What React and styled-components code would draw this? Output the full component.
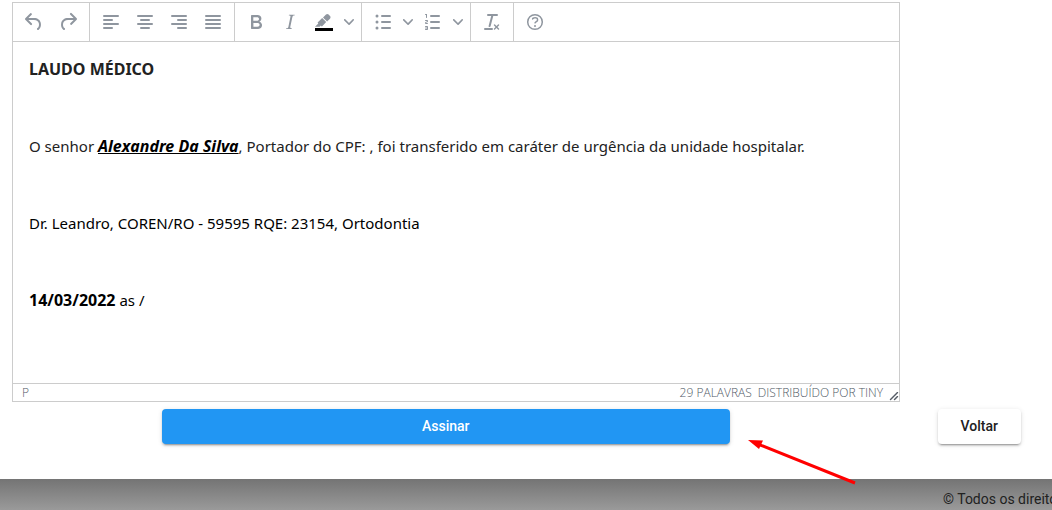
import React from 'react';
import styled, { createGlobalStyle } from 'styled-components';

const GlobalStyle = createGlobalStyle`
    * {
        box-sizing: border-box;
    }

    body {
        margin: 0;
        background: #9a9a9a;
        font-family: Roboto, "Liberation Sans", sans-serif;
        overflow-x: hidden;
    }
`;

const Card = styled.main`
    background: #fff;
    padding: 2px 31px 35px 12px;
`;

const Editor = styled.section`
    margin-right: 121px;
    border: 1px solid #ccc;
    background: #fff;
`;

const Toolbar = styled.div`
    display: flex;
    height: 39px;
    border-bottom: 1px solid #ccc;
`;

const ToolGroup = styled.div`
    display: flex;
    align-items: center;
    padding: 0 4px;

    & + & {
        border-left: 1px solid #ccc;
    }
`;

const ToolButton = styled.button`
    display: flex;
    align-items: center;
    justify-content: center;
    width: ${({ $narrow }) => ($narrow ? '16px' : '34px')};
    height: 34px;
    padding: 0;
    border: none;
    border-radius: 3px;
    background: none;
    color: #8f969f;
    cursor: pointer;

    &:hover {
        background: #dee0e2;
    }

    svg {
        display: block;
        flex: none;
        fill: currentColor;
    }
`;

const Content = styled.div`
    height: 341px;
    padding: 16px;
    overflow: hidden;
    color: #222;
    font-family: "Segoe UI", "Noto Sans", "Open Sans", sans-serif;
    font-size: 15px;
    line-height: 22px;
    outline: none;

    strong {
        font-size: 16px;
    }
`;

const Paragraph = styled.p`
    margin: 0 0 55px;
    color: ${({ $dark }) => ($dark ? '#000' : 'inherit')};
`;

const PatientName = styled.strong`
    color: #000;
    font-style: italic;
    text-decoration: underline;
`;

const StatusBar = styled.div`
    display: flex;
    align-items: center;
    height: 18px;
    padding: 0 0 0 9px;
    border-top: 1px solid #ccc;
    color: #4f5966;
    font-family: "Segoe UI", "Open Sans", "Noto Sans", sans-serif;
    font-size: 12px;
    font-weight: 300;
    line-height: 18px;
    text-transform: uppercase;
`;

const StatusInfo = styled.div`
    display: flex;
    gap: 6px;
    margin-left: auto;

    a {
        color: inherit;
        text-decoration: none;
    }
`;

const ResizeHandle = styled.svg`
    align-self: flex-end;
    margin-left: 6px;
    fill: #555c66;
    cursor: nwse-resize;
`;

const Actions = styled.div`
    position: relative;
    display: flex;
    gap: 208px;
    margin-top: 7px;
    padding-left: 150px;
`;

const ActionButton = styled.button`
    flex: ${({ $primary }) => ($primary ? '1' : 'none')};
    height: 35px;
    padding: 0 23px 2px;
    border: none;
    border-radius: 4px;
    background: ${({ $primary }) => ($primary ? '#2196f3' : '#fff')};
    color: ${({ $primary }) => ($primary ? '#fff' : '#212121')};
    box-shadow: 0 3px 1px -2px rgba(0, 0, 0, 0.2), 0 2px 2px rgba(0, 0, 0, 0.14), 0 1px 5px rgba(0, 0, 0, 0.12);
    font-family: Roboto, "Liberation Sans", sans-serif;
    font-size: 14px;
    font-weight: 500;
    cursor: pointer;
`;

const Arrow = styled.svg`
    position: absolute;
    top: 29px;
    right: 164px;
    pointer-events: none;
`;

const Footer = styled.footer`
    display: flex;
    justify-content: flex-end;
    padding: 11px 0 0;
    height: 31px;
    background: linear-gradient(#747474, #9a9a9a);
    color: #212121;
    font-size: 14px;
    line-height: 18px;
`;

const Copyright = styled.span`
    width: 109px;
    overflow: hidden;
    white-space: nowrap;
`;

const line = (x, y, width) => <rect key={y} x={x} y={y} width={width} height="2" rx="1" />;

const icons = {
    undo: <path d="M6.4 8H12c3.7 0 6.2 2 6.8 5.1.6 2.7-.4 5.6-2.3 6.8a1 1 0 0 1-1-1.8c1.1-.6 1.8-2.7 1.4-4.6-.5-2.1-2.1-3.5-4.9-3.5H6.4l3.3 3.3a1 1 0 1 1-1.4 1.4l-5-5a1 1 0 0 1 0-1.4l5-5a1 1 0 0 1 1.4 1.4L6.4 8z" />,
    redo: <path d="M17.6 10H12c-2.8 0-4.4 1.4-4.9 3.5-.4 2 .3 4 1.4 4.6a1 1 0 1 1-1 1.8c-2-1.2-2.9-4.1-2.3-6.8.6-3 3-5.1 6.8-5.1h5.6l-3.3-3.3a1 1 0 1 1 1.4-1.4l5 5a1 1 0 0 1 0 1.4l-5 5a1 1 0 0 1-1.4-1.4l3.3-3.3z" />,
    alignLeft: [line(4, 5, 16), line(4, 9, 10), line(4, 13, 16), line(4, 17, 10)],
    alignCenter: [line(4, 5, 16), line(7, 9, 10), line(4, 13, 16), line(7, 17, 10)],
    alignRight: [line(4, 5, 16), line(10, 9, 10), line(4, 13, 16), line(10, 17, 10)],
    alignJustify: [line(4, 5, 16), line(4, 9, 16), line(4, 13, 16), line(4, 17, 16)],
    bold: <path fillRule="evenodd" d="M7.8 19c-.3 0-.5 0-.6-.2l-.2-.5V5.7c0-.2 0-.4.2-.5l.6-.2h5c1.5 0 2.7.3 3.5 1 .7.6 1.1 1.4 1.1 2.5a3 3 0 0 1-.6 1.9c-.4.6-1 1-1.6 1.2.4.1.9.3 1.3.6s.8.7 1 1.2c.4.4.5 1 .5 1.6 0 1.3-.4 2.3-1.3 3-.8.7-2.1 1-3.8 1H7.8zm5-8.3c.6 0 1.2-.1 1.6-.5.4-.3.6-.7.6-1.3 0-1.1-.8-1.7-2.3-1.7H9.3v3.5h3.4zm.5 6c.7 0 1.3-.1 1.7-.4.4-.4.6-.9.6-1.5s-.2-1-.7-1.4c-.4-.3-1-.4-2-.4H9.4v3.8h4z" />,
    italic: <path d="M16.7 4.7l-.1.9h-.3c-.6 0-1 0-1.4.3-.3.3-.4.6-.5 1.1l-2.1 9.8v.6c0 .5.4.8 1.4.8h.2l-.2.8H8l.2-.8h.2c1.1 0 1.8-.5 2-1.5l2-9.8.1-.5c0-.6-.4-.8-1.4-.8h-.3l.2-.9h5.8z" />,
    highlight: (
        <>
            <path fill="#000" d="M3 18h18v3H3z" />
            <path d="M7.7 16.7H3l3.3-3.3-.7-.8L10.2 8l4 4.1-4 4.2c-.2.2-.6.2-.8 0l-.6-.7-1.1 1.1zm5-7.5L11 7.4l3-2.9a2 2 0 0 1 2.6 0L18 6c.7.7.7 2 0 2.7l-2.9 2.9-1.8-1.8-.5-.6" />
        </>
    ),
    bulletList: (
        <>
            {[line(10, 5, 10), line(10, 11, 10), line(10, 17, 10)]}
            <circle cx="6" cy="6" r="1.5" />
            <circle cx="6" cy="12" r="1.5" />
            <circle cx="6" cy="18" r="1.5" />
        </>
    ),
    numberList: (
        <>
            {[line(9, 5, 10), line(9, 11, 10), line(9, 17, 10)]}
            <path d="M6 4v3.5c0 .3-.2.5-.5.5a.5.5 0 0 1-.5-.5V5h-.5a.5.5 0 0 1 0-1H6zm-1 8.8l.2.2h1.3c.3 0 .5.2.5.5s-.2.5-.5.5H4.9a1 1 0 0 1-.9-1V13c0-.4.3-.8.6-1l1.2-.4.2-.3a.2.2 0 0 0-.2-.2H4.5a.5.5 0 0 1-.5-.5c0-.3.2-.5.5-.5h1.6c.5 0 .9.4.9 1v.1c0 .4-.3.8-.6 1l-1.2.4-.2.3zM7 17v2c0 .6-.4 1-1 1H4.5a.5.5 0 0 1 0-1h1.2c.2 0 .3-.1.3-.3 0-.2-.1-.3-.3-.3H4.4a.4.4 0 1 1 0-.8h1.3c.2 0 .3-.1.3-.3 0-.2-.1-.3-.3-.3H4.5a.5.5 0 1 1 0-1H6c.6 0 1 .4 1 1z" />
        </>
    ),
    clearFormat: <path d="M13.2 6a1 1 0 0 1 0 .2l-2.6 10a1 1 0 0 1-1 .8h-.2a.8.8 0 0 1-.8-1l2.6-10H8a1 1 0 1 1 0-2h9a1 1 0 0 1 0 2h-3.8zM5 18h7a1 1 0 0 1 0 2H5a1 1 0 0 1 0-2zm13 1.5L16.5 18 15 19.5a.7.7 0 0 1-1-1l1.5-1.5-1.5-1.5a.7.7 0 0 1 1-1l1.5 1.5 1.5-1.5a.7.7 0 0 1 1 1L17.5 17l1.5 1.5a.7.7 0 0 1-1 1z" />,
    help: (
        <>
            <circle cx="12" cy="12" r="7.3" fill="none" stroke="currentColor" strokeWidth="1.5" />
            <path d="M9.6 9.7a.7.7 0 0 1-.7-.8c0-1.1 1.5-1.8 3.2-1.8 1.8 0 3.2.8 3.2 2.4 0 1.4-.4 2.1-1.5 2.8-.2 0-.3.1-.3.2a2 2 0 0 0-.8.8.8.8 0 0 1-1.4-.6c.3-.7.8-1 1.3-1.5l.4-.2c.7-.4.8-.6.8-1.5 0-.5-.6-.9-1.7-.9-.5 0-1 .1-1.4.3-.2 0-.3.1-.3.2v-.2c0 .4-.4.8-.8.8z" />
            <circle cx="12" cy="16" r="1" />
        </>
    ),
};

const toolGroups = [
    [
        { icon: 'undo', label: 'Desfazer' },
        { icon: 'redo', label: 'Refazer' },
    ],
    [
        { icon: 'alignLeft', label: 'Alinhar à esquerda' },
        { icon: 'alignCenter', label: 'Centralizar' },
        { icon: 'alignRight', label: 'Alinhar à direita' },
        { icon: 'alignJustify', label: 'Justificar' },
    ],
    [
        { icon: 'bold', label: 'Negrito' },
        { icon: 'italic', label: 'Itálico' },
        { icon: 'highlight', label: 'Cor do fundo', menu: true },
    ],
    [
        { icon: 'bulletList', label: 'Lista não ordenada', menu: true },
        { icon: 'numberList', label: 'Lista ordenada', menu: true },
    ],
    [{ icon: 'clearFormat', label: 'Limpar formatação' }],
    [{ icon: 'help', label: 'Ajuda' }],
];

const Tool = ({ icon, label, menu }) => (
    <>
        <ToolButton type="button" aria-label={label}>
            <svg width="24" height="24" viewBox="0 0 24 24">{icons[icon]}</svg>
        </ToolButton>
        {menu && (
            <ToolButton type="button" $narrow aria-label={`${label}: opções`}>
                <svg width="10" height="10" viewBox="0 0 10 10">
                    <path d="M8.7 2.2c.3-.3.8-.3 1 0 .4.4.4.9 0 1.2L5.7 7.8c-.3.3-.9.3-1.2 0L.2 3.4a.8.8 0 0 1 0-1.2c.3-.3.8-.3 1.1 0L5 6l3.7-3.8z" />
                </svg>
            </ToolButton>
        )}
    </>
);

const App = () => {
    return (
        <>
            <GlobalStyle />
            <Card>
                <Editor>
                    <Toolbar role="toolbar">
                        {toolGroups.map((tools, groupIndex) => (
                            <ToolGroup key={groupIndex}>
                                {tools.map((tool) => (
                                    <Tool key={tool.icon} {...tool} />
                                ))}
                            </ToolGroup>
                        ))}
                    </Toolbar>
                    <Content contentEditable suppressContentEditableWarning spellCheck={false} role="textbox" aria-multiline="true" aria-label="Laudo">
                        <Paragraph><strong>LAUDO MÉDICO</strong></Paragraph>
                        <Paragraph>
                            O senhor <PatientName>Alexandre Da Silva</PatientName>, Portador do CPF: , foi transferido em caráter de urgência da unidade hospitalar.
                        </Paragraph>
                        <Paragraph $dark>Dr. Leandro, COREN/RO - 59595 RQE: 23154, Ortodontia</Paragraph>
                        <Paragraph $dark><strong>14/03/2022</strong> as /</Paragraph>
                    </Content>
                    <StatusBar>
                        <span>p</span>
                        <StatusInfo>
                            <span>29 palavras</span>
                            <a href="#tiny">Distribuído por Tiny</a>
                        </StatusInfo>
                        <ResizeHandle width="10" height="10" viewBox="0 0 10 10">
                            <path d="M8.1 1.1A.5.5 0 1 1 9 2l-7 7A.5.5 0 1 1 1 8l7-7zM8.1 5.1A.5.5 0 1 1 9 6l-3 3A.5.5 0 1 1 5 8l3-3z" />
                        </ResizeHandle>
                    </StatusBar>
                </Editor>
                <Actions>
                    <ActionButton type="button" $primary>Assinar</ActionButton>
                    <ActionButton type="button">Voltar</ActionButton>
                    <Arrow width="110" height="48" viewBox="0 0 110 48">
                        <path d="M12 6.500L108 45" fill="none" stroke="#f00" strokeWidth="3" />
                        <path d="M1 2L16 2.500L12 11z" fill="#f00" />
                    </Arrow>
                </Actions>
            </Card>
            <Footer>
                <Copyright>© Todos os direitos</Copyright>
            </Footer>
        </>
    );
};

export default App;
